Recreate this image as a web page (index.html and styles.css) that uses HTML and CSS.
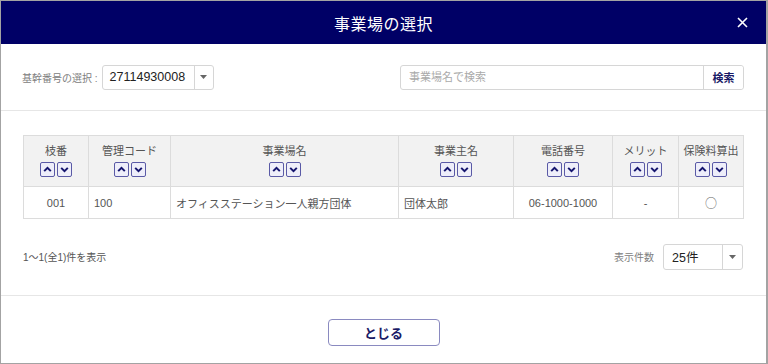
FILE: index.html
```html
<!DOCTYPE html>
<html lang="ja">
<head>
    <meta charset="UTF-8">
    <meta name="viewport" content="width=device-width, initial-scale=1.0">
    <title>事業場の選択</title>
    <link rel="stylesheet" href="styles.css">
</head>
<body>
    <div class="modal">
        <header class="modal-header">
            <span></span>
            <h1>事業場の選択</h1>
            <button class="close-button" aria-label="閉じる">
                <svg width="11" height="11" viewBox="0 0 11 11"><path d="M1 1L10 10M10 1L1 10" stroke="#fff" stroke-width="1.6"/></svg>
            </button>
        </header>

        <div class="toolbar">
            <div class="field">
                <label>基幹番号の選択 :</label>
                <div class="select select-code">
                    <span class="select-value">27114930008</span>
                    <span class="select-arrow"><svg width="7" height="4" viewBox="0 0 7 4"><path d="M0 0H7L3.5 4Z" fill="#666"/></svg></span>
                </div>
            </div>
            <div class="search">
                <input type="text" placeholder="事業場名で検索">
                <button class="search-button">検索</button>
            </div>
        </div>

        <main class="content">
            <table class="list">
                <colgroup>
                    <col style="width: 65px">
                    <col style="width: 82px">
                    <col style="width: 228px">
                    <col style="width: 115px">
                    <col style="width: 99px">
                    <col style="width: 66px">
                    <col style="width: 65px">
                </colgroup>
                <thead>
                    <tr>
                        <th>枝番<div class="sort"><span class="sort-btn"><svg viewBox="0 0 10 10"><path d="M2 6.5L5 3.5L8 6.5" fill="none" stroke="#14146e" stroke-width="1.8"/></svg></span><span class="sort-btn"><svg viewBox="0 0 10 10"><path d="M2 3.5L5 6.5L8 3.5" fill="none" stroke="#14146e" stroke-width="1.8"/></svg></span></div></th>
                        <th>管理コード<div class="sort"><span class="sort-btn"><svg viewBox="0 0 10 10"><path d="M2 6.5L5 3.5L8 6.5" fill="none" stroke="#14146e" stroke-width="1.8"/></svg></span><span class="sort-btn"><svg viewBox="0 0 10 10"><path d="M2 3.5L5 6.5L8 3.5" fill="none" stroke="#14146e" stroke-width="1.8"/></svg></span></div></th>
                        <th>事業場名<div class="sort"><span class="sort-btn"><svg viewBox="0 0 10 10"><path d="M2 6.5L5 3.5L8 6.5" fill="none" stroke="#14146e" stroke-width="1.8"/></svg></span><span class="sort-btn"><svg viewBox="0 0 10 10"><path d="M2 3.5L5 6.5L8 3.5" fill="none" stroke="#14146e" stroke-width="1.8"/></svg></span></div></th>
                        <th>事業主名<div class="sort"><span class="sort-btn"><svg viewBox="0 0 10 10"><path d="M2 6.5L5 3.5L8 6.5" fill="none" stroke="#14146e" stroke-width="1.8"/></svg></span><span class="sort-btn"><svg viewBox="0 0 10 10"><path d="M2 3.5L5 6.5L8 3.5" fill="none" stroke="#14146e" stroke-width="1.8"/></svg></span></div></th>
                        <th>電話番号<div class="sort"><span class="sort-btn"><svg viewBox="0 0 10 10"><path d="M2 6.5L5 3.5L8 6.5" fill="none" stroke="#14146e" stroke-width="1.8"/></svg></span><span class="sort-btn"><svg viewBox="0 0 10 10"><path d="M2 3.5L5 6.5L8 3.5" fill="none" stroke="#14146e" stroke-width="1.8"/></svg></span></div></th>
                        <th>メリット<div class="sort"><span class="sort-btn"><svg viewBox="0 0 10 10"><path d="M2 6.5L5 3.5L8 6.5" fill="none" stroke="#14146e" stroke-width="1.8"/></svg></span><span class="sort-btn"><svg viewBox="0 0 10 10"><path d="M2 3.5L5 6.5L8 3.5" fill="none" stroke="#14146e" stroke-width="1.8"/></svg></span></div></th>
                        <th>保険料算出<div class="sort"><span class="sort-btn"><svg viewBox="0 0 10 10"><path d="M2 6.5L5 3.5L8 6.5" fill="none" stroke="#14146e" stroke-width="1.8"/></svg></span><span class="sort-btn"><svg viewBox="0 0 10 10"><path d="M2 3.5L5 6.5L8 3.5" fill="none" stroke="#14146e" stroke-width="1.8"/></svg></span></div></th>
                    </tr>
                </thead>
                <tbody>
                    <tr>
                        <td class="center">001</td>
                        <td>100</td>
                        <td>オフィスステーション一人親方団体</td>
                        <td>団体太郎</td>
                        <td class="center">06-1000-1000</td>
                        <td class="center">-</td>
                        <td class="center"><span class="mark">○</span></td>
                    </tr>
                </tbody>
            </table>

            <div class="pager">
                <p class="count">1〜1(全1)件を表示</p>
                <div class="field">
                    <label>表示件数</label>
                    <div class="select select-size">
                        <span class="select-value">25件</span>
                        <span class="select-arrow"><svg width="7" height="4" viewBox="0 0 7 4"><path d="M0 0H7L3.5 4Z" fill="#666"/></svg></span>
                    </div>
                </div>
            </div>
        </main>

        <footer class="modal-footer">
            <button class="close-footer">とじる</button>
        </footer>
    </div>
</body>
</html>
```

FILE: styles.css
```css
/* リセット */
* {
    margin: 0;
    padding: 0;
    box-sizing: border-box;
    font-family: "Liberation Sans", "Noto Sans CJK JP", sans-serif;
}

body {
    background: #fff;
    color: #333;
}

/* モーダル枠 */
.modal {
    width: 768px;
    height: 364px;
    border: 1px solid #a3a3a3;
    border-right-width: 2px;
    display: flex;
    flex-direction: column;
}

.modal-header {
    height: 43px;
    background: #000066;
    display: grid;
    grid-template-columns: 1fr auto 1fr;
    align-items: center;
}

.modal-header h1 {
    color: #fff;
    font-size: 16px;
    font-weight: 400;
    letter-spacing: 0.5px;
}

.close-button {
    justify-self: end;
    margin-right: 16px;
    width: 16px;
    height: 16px;
    background: none;
    border: none;
    display: flex;
    align-items: center;
    justify-content: center;
}

/* 上部の検索エリア */
.toolbar {
    height: 67px;
    padding: 0 22px 0 21px;
    display: flex;
    align-items: center;
    justify-content: space-between;
    border-bottom: 1px solid #e6e6e6;
}

.field {
    display: flex;
    align-items: center;
}

.field label {
    font-size: 10px;
    color: #808080;
    margin-right: 4px;
}

.select {
    height: 25px;
    border: 1px solid #d6d6d6;
    border-radius: 3px;
    display: flex;
    align-items: stretch;
    background: #fff;
}

.select-value {
    flex: 1;
    display: flex;
    align-items: center;
    padding-left: 7px;
    font-size: 12.5px;
    color: #222;
}

.select-arrow {
    width: 19px;
    border-left: 1px solid #d6d6d6;
    display: flex;
    align-items: center;
    justify-content: center;
}

.select-code {
    width: 112px;
}

.search {
    display: flex;
    width: 344px;
    height: 25px;
    border: 1px solid #d6d6d6;
    border-radius: 3px;
}

.search input {
    flex: 1;
    border: none;
    outline: none;
    padding-left: 8px;
    font-size: 11px;
    color: #333;
    background: transparent;
}

.search input::placeholder {
    color: #aaa;
}

.search-button {
    width: 40px;
    border: none;
    border-left: 1px solid #d6d6d6;
    background: #fff;
    border-radius: 0 3px 3px 0;
    font-size: 11px;
    font-weight: 700;
    color: #1a1a66;
}

/* 一覧 */
.content {
    padding: 24px 23px 0 22px;
    border-bottom: 1px solid #e6e6e6;
}

.list {
    width: 720px;
    border-collapse: collapse;
    table-layout: fixed;
    font-size: 11px;
}

.list th,
.list td {
    border: 1px solid #dcdcdc;
}

.list th {
    height: 51px;
    background: #f2f2f2;
    font-weight: 400;
    color: #555;
    vertical-align: top;
    padding-top: 8px;
    line-height: 14px;
}

.list td {
    height: 32px;
    padding: 0 5px;
    color: #555;
}

.list td.center {
    text-align: center;
}

.mark {
    font-family: "Noto Sans CJK JP", sans-serif;
    font-size: 12px;
    color: #666;
}

.sort {
    display: flex;
    justify-content: center;
    gap: 2px;
    margin-top: 4px;
}

.sort-btn {
    width: 15px;
    height: 15px;
    border: 1.5px solid #5a5aa6;
    border-radius: 2px;
    background: #eeeefa;
    display: flex;
    align-items: center;
    justify-content: center;
}

.sort-btn svg {
    width: 11px;
    height: 11px;
}

/* ページャ */
.pager {
    height: 76px;
    display: flex;
    align-items: center;
    justify-content: space-between;
    padding-bottom: 1px;
}

.count {
    font-size: 10px;
    color: #555;
}

.pager .field label {
    margin-right: 9px;
}

.select-size {
    width: 80px;
    height: 26px;
}

.select-size .select-value {
    padding-left: 8px;
}

.select-size .select-arrow {
    width: 20px;
}

/* フッター */
.modal-footer {
    flex: 1;
    display: flex;
    justify-content: center;
    padding-top: 23px;
}

.close-footer {
    width: 112px;
    height: 27px;
    border: 1px solid #8a8ac0;
    border-radius: 4px;
    background: #fff;
    font-size: 13px;
    font-weight: 700;
    color: #1a1a66;
}
```
